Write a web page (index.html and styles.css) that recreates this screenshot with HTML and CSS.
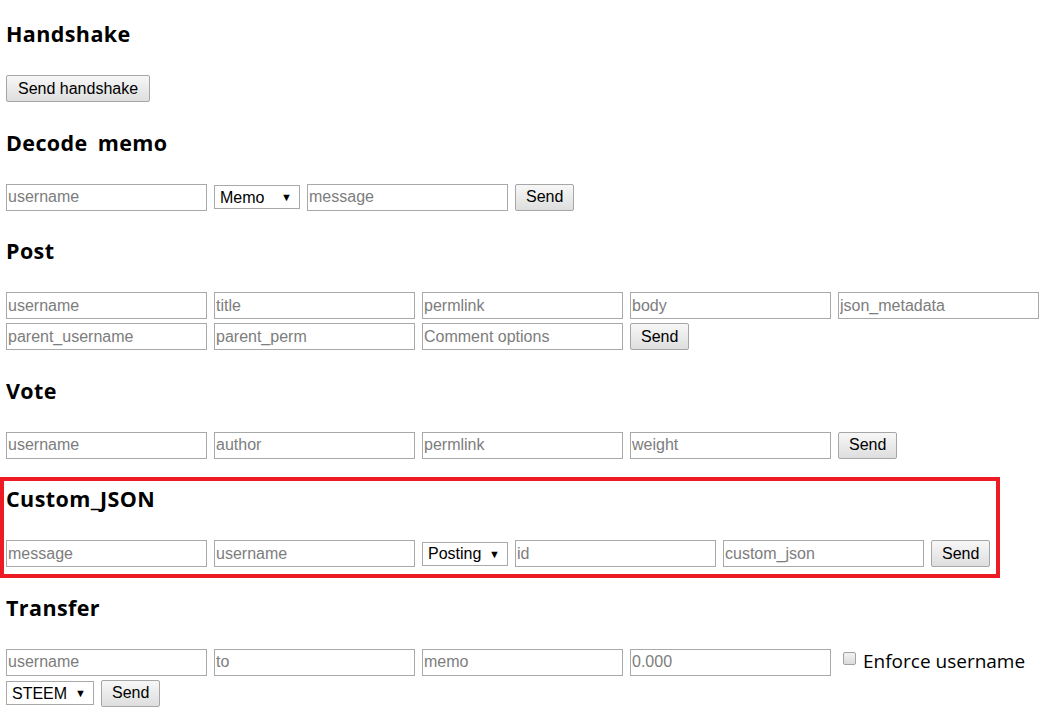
FILE: index.html
```html
<!DOCTYPE html>
<html lang="en">
<head>
    <meta charset="UTF-8">
    <meta name="viewport" content="width=device-width, initial-scale=1.0">
    <title>Steem Keychain test</title>
    <link rel="stylesheet" href="styles.css">
</head>
<body>
    <div class="section first">
        <h3>Handshake</h3>
        <div class="row">
            <button class="btn" id="sendHandshake">Send handshake</button>
        </div>
    </div>

    <div class="section">
        <h3>Decode memo</h3>
        <div class="row">
            <input class="field" type="text" placeholder="username">
            <span class="select-wrap">
                <select class="select select-key">
                    <option>Memo</option>
                    <option>Posting</option>
                    <option>Active</option>
                </select>
            </span>
            <input class="field" type="text" placeholder="message">
            <button class="btn">Send</button>
        </div>
    </div>

    <div class="section">
        <h3>Post</h3>
        <div class="row">
            <input class="field" type="text" placeholder="username">
            <input class="field" type="text" placeholder="title">
            <input class="field" type="text" placeholder="permlink">
            <input class="field" type="text" placeholder="body">
            <input class="field" type="text" placeholder="json_metadata">
            <input class="field" type="text" placeholder="parent_username">
            <input class="field" type="text" placeholder="parent_perm">
            <input class="field" type="text" placeholder="Comment options">
            <button class="btn">Send</button>
        </div>
    </div>

    <div class="section">
        <h3>Vote</h3>
        <div class="row">
            <input class="field" type="text" placeholder="username">
            <input class="field" type="text" placeholder="author">
            <input class="field" type="text" placeholder="permlink">
            <input class="field" type="text" placeholder="weight">
            <button class="btn">Send</button>
        </div>
    </div>

    <div class="section highlight">
        <h3>Custom_JSON</h3>
        <div class="row">
            <input class="field" type="text" placeholder="message">
            <input class="field" type="text" placeholder="username">
            <span class="select-wrap">
                <select class="select select-key">
                    <option>Posting</option>
                    <option>Active</option>
                </select>
            </span>
            <input class="field" type="text" placeholder="id">
            <input class="field" type="text" placeholder="custom_json">
            <button class="btn">Send</button>
        </div>
    </div>

    <div class="section">
        <h3>Transfer</h3>
        <div class="row">
            <input class="field" type="text" placeholder="username">
            <input class="field" type="text" placeholder="to">
            <input class="field" type="text" placeholder="memo">
            <input class="field" type="text" placeholder="0.000">
            <label class="check-label"><input class="check" type="checkbox">Enforce username</label>
            <span class="select-wrap">
                <select class="select select-asset">
                    <option>STEEM</option>
                    <option>SBD</option>
                </select>
            </span>
            <button class="btn">Send</button>
        </div>
    </div>
</body>
</html>
```

FILE: styles.css
```css
body {
    margin: 0;
    padding: 0 6px;
    font-family: "Open Sans", "Noto Sans", sans-serif;
    color: #000;
    background: #fff;
}
.section {
    margin-top: 25.5px;
}
.section.first {
    margin-top: 19px;
}
h3 {
    margin: 0 0 26px;
    font-size: 21.5px;
    line-height: 30px;
    font-weight: bold;
    letter-spacing: 0.4px;
    word-spacing: 4px;
}
.row {
    display: flex;
    flex-wrap: wrap;
    align-items: center;
    column-gap: 7px;
    row-gap: 4px;
}
.field {
    width: 201px;
    height: 27px;
    box-sizing: border-box;
    margin: 0;
    padding: 0 1px;
    border: 1px solid #a9a9a9;
    font-family: "Liberation Sans", Arial, sans-serif;
    font-size: 16px;
    color: #000;
    background: #fff;
}
.field::placeholder {
    color: #7d7d7d;
}
.btn {
    height: 27px;
    box-sizing: border-box;
    margin: 0;
    padding: 0 10px;
    border: 1px solid #a6a6a6;
    border-radius: 2px;
    background: linear-gradient(#f7f7f7, #dedede);
    font-family: "Liberation Sans", Arial, sans-serif;
    font-size: 16px;
    color: #000;
}
#sendHandshake {
    padding: 0 11px;
}
.select-wrap {
    position: relative;
    display: inline-block;
}
.select {
    -webkit-appearance: none;
    appearance: none;
    height: 24px;
    box-sizing: border-box;
    margin: 0;
    padding: 0 0 0 5px;
    border: 1px solid #a9a9a9;
    border-radius: 0;
    background: #fff;
    font-family: "Liberation Sans", Arial, sans-serif;
    font-size: 16px;
    color: #000;
    display: block;
}
.select-key {
    width: 86px;
}
.select-asset {
    width: 88px;
}
.select-wrap::after {
    content: "\25BC";
    position: absolute;
    right: 8px;
    top: 6px;
    font-size: 11px;
    line-height: 12px;
    color: #000;
    pointer-events: none;
}
.check-label {
    font-size: 19px;
    line-height: 24px;
    margin-bottom: 3px;
    white-space: nowrap;
}
.check {
    -webkit-appearance: none;
    appearance: none;
    width: 13px;
    height: 13px;
    box-sizing: border-box;
    margin: 3px 7px 3px 5px;
    border: 1px solid #a2a2a2;
    border-radius: 2px;
    background: linear-gradient(#f2f2f2, #dcdcdc);
    vertical-align: baseline;
}
.highlight {
    position: relative;
}
/* red annotation frame around the custom json block */
.highlight::after {
    content: "";
    position: absolute;
    left: -6px;
    top: -7px;
    bottom: -11px;
    width: 1000px;
    box-sizing: border-box;
    border: 4px solid #ed1c24;
    pointer-events: none;
}
```
